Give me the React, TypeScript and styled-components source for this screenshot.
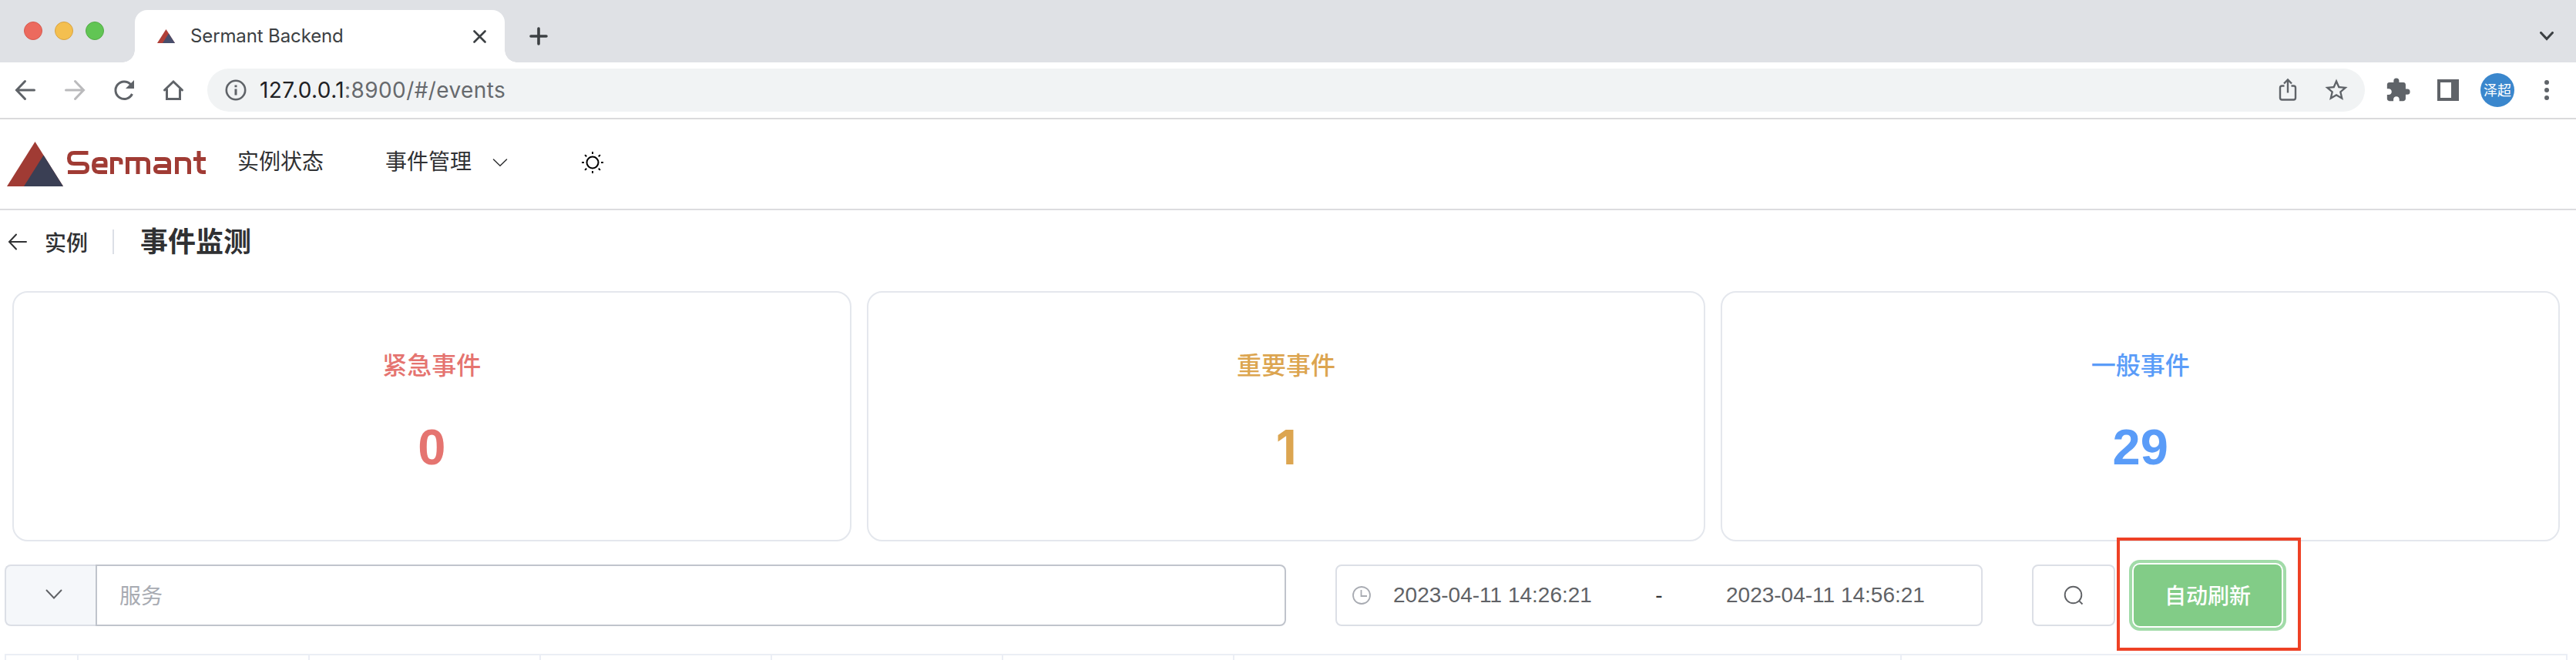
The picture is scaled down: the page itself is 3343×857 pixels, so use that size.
import React from "react";
import styled, { createGlobalStyle, css } from "styled-components";

const GlobalStyle = createGlobalStyle`
  *, *::before, *::after { box-sizing: border-box; }
  body { margin: 0; background: #fff; overflow: hidden; }
  button { font: inherit; padding: 0; margin: 0; border: 0; background: none; }
`;

const uiFont = `Inter, Roboto, "Noto Sans CJK SC", sans-serif`;
const pageFont = `"Liberation Sans", "Noto Sans CJK SC", sans-serif`;

const Window = styled.div`
  width: 3343px;
  height: 857px;
  overflow: hidden;
  display: flex;
  flex-direction: column;
  background: #fff;
  font-family: ${pageFont};
  color: #303133;
  svg { display: block; flex: none; }
`;

/* ---------- browser chrome ---------- */
const TabStrip = styled.header`
  flex: none;
  height: 81px;
  background: #dfe1e5;
  display: flex;
  align-items: flex-end;
  padding: 0 29px 0 31px;
`;
const Lights = styled.div`
  display: flex;
  gap: 16px;
  width: 144px;
  height: 52px;
  align-self: flex-start;
  align-items: flex-end;
`;
const Light = styled.i<{ $fill: string; $edge: string }>`
  width: 24px;
  height: 24px;
  border-radius: 50%;
  background: ${(p) => p.$fill};
  border: 1px solid ${(p) => p.$edge};
`;
const Tab = styled.div`
  position: relative;
  width: 480px;
  height: 68px;
  border-radius: 16px 16px 0 0;
  background: #fff;
  display: flex;
  align-items: center;
  padding: 0 24px 0 29px;
  &::before, &::after {
    content: "";
    position: absolute;
    bottom: 0;
    width: 16px;
    height: 16px;
  }
  &::before { left: -16px; background: radial-gradient(circle at 0 0, transparent 15.5px, #fff 16px); }
  &::after { right: -16px; background: radial-gradient(circle at 100% 0, transparent 15.5px, #fff 16px); }
`;
const TabTitle = styled.span`
  flex: 1;
  margin-left: 20px;
  margin-top: -1px;
  font: 400 24px/32px ${uiFont};
  letter-spacing: -0.12px;
  color: #3c4043;
`;
const NewTab = styled.button`
  height: 68px;
  margin-left: 32px;
  display: flex;
  align-items: center;
`;
const TabMenu = styled.button`
  height: 68px;
  margin-left: auto;
  display: flex;
  align-items: center;
`;
const Toolbar = styled.div`
  flex: none;
  height: 74px;
  border-bottom: 2px solid #dadadc;
  display: flex;
  align-items: center;
  padding: 0 32px 0 18px;
`;
const NavButtons = styled.div`
  display: flex;
  gap: 34px;
  width: 251px;
`;
const AddressBar = styled.div`
  width: 2800px;
  height: 56px;
  border-radius: 28px;
  background: #f1f3f4;
  display: flex;
  align-items: center;
  padding: 0 21px 0 22px;
`;
const Url = styled.span`
  flex: 1;
  margin-left: 16px;
  font: 400 28px/36px ${uiFont};
  letter-spacing: 0.4px;
  color: #66696d;
  b { font-weight: 400; color: #202124; }
`;
const AddressActions = styled.div`
  display: flex;
  gap: 34px;
`;
const Extensions = styled.div`
  flex: 1;
  display: flex;
  align-items: center;
  margin-left: 26px;
`;
const SidePanelIcon = styled.svg`
  margin-left: 34px;
`;
const Avatar = styled.div`
  width: 44px;
  height: 44px;
  margin: 0 36px 0 28px;
  border-radius: 50%;
  background: #3a87cd;
  color: #fff;
  font: 400 18px/43px "Noto Sans CJK SC", sans-serif;
  text-align: center;
`;

/* ---------- application header ---------- */
const AppBar = styled.nav`
  flex: none;
  height: 118px;
  border-bottom: 2px solid #dcdcdf;
  display: flex;
  align-items: center;
  padding: 0 9px 4px;
`;
const Brand = styled.div`
  width: 299px;
  height: 62px;
  display: flex;
  align-items: center;
  gap: 5px;
  & > :first-child { align-self: flex-end; }
`;
const NavItem = styled.a`
  display: flex;
  align-items: center;
  margin-right: 80px;
  font-size: 28px;
  line-height: 40px;
  gap: 27px;
  &:last-of-type { margin-right: 96px; }
`;
const PageHeader = styled.div`
  flex: none;
  height: 105px;
  display: flex;
  align-items: flex-start;
  padding: 21px 0 0 10px;
`;
const Back = styled.div`
  height: 40px;
  display: flex;
  align-items: center;
  gap: 22px;
  font-size: 28px;
  font-weight: 500;
`;
const Rule = styled.i`
  width: 2px;
  height: 32px;
  margin: 4px 34px 0 32px;
  background: #dcdfe6;
`;
const PageTitle = styled.h1`
  margin: 1px 0 0;
  font-size: 36px;
  line-height: 40px;
  font-weight: 600;
`;

/* ---------- summary cards ---------- */
const Cards = styled.section`
  flex: none;
  display: grid;
  grid-template-columns: repeat(3, 1fr);
  gap: 20px;
  padding: 0 21px 0 16px;
`;
const Card = styled.article<{ $color: string }>`
  height: 325px;
  border: 2px solid #e4e7ed;
  border-radius: 20px;
  display: flex;
  flex-direction: column;
  align-items: center;
  color: ${(p) => p.$color};
`;
const CardTitle = styled.div`
  margin-top: 71px;
  font-size: 32px;
  line-height: 48px;
  font-weight: 500;
`;
const CardValue = styled.div<{ $plainOne: boolean }>`
  margin-top: 46px;
  font-family: ${(p) => (p.$plainOne ? uiFont : pageFont)};
  font-size: ${(p) => (p.$plainOne ? 62 : 65)}px;
  line-height: 72px;
  font-weight: 700;
`;

/* ---------- filters ---------- */
const Filters = styled.section`
  flex: none;
  display: flex;
  align-items: center;
  height: 80px;
  margin-top: 30px;
  padding-left: 6px;
`;
const box = css`
  height: 80px;
  border: 2px solid #dcdfe6;
  border-radius: 8px;
  display: flex;
  align-items: center;
`;
const Prepend = styled.div`
  ${box}
  width: 118px;
  border-right: 0;
  border-radius: 8px 0 0 8px;
  background: #f5f7fa;
  justify-content: center;
  padding: 0 0 3px 8px;
`;
const SearchField = styled.div`
  ${box}
  width: 1545px;
  border-color: #c0c4cc;
  border-radius: 0 8px 8px 0;
  padding: 0 0 2px 29px;
  font-size: 28px;
  color: #a8abb2;
`;
const DateRange = styled.div`
  ${box}
  width: 840px;
  margin-left: 64px;
  padding-left: 20px;
  font-size: 28px;
  color: #606266;
`;
const ClockIcon = styled.svg`
  margin-right: 29px;
`;
const DateText = styled.span`
  width: 260px;
  white-space: nowrap;
`;
const Dash = styled.span`
  flex: none;
  width: 172px;
  padding-right: 2px;
  text-align: center;
  color: #303133;
`;
const SearchButton = styled.button`
  ${box}
  width: 108px;
  margin-left: 64px;
  border: 2px solid #dcdfe6;
  justify-content: center;
`;
const Highlight = styled.div`
  position: relative;
  z-index: 1;
  flex: none;
  width: 239px;
  height: 147px;
  margin: -3px 0 0 2px;
  border: 4px solid #ee4125;
  display: flex;
  align-items: center;
  justify-content: center;
`;
const RefreshButton = styled.button`
  width: 192px;
  height: 80px;
  margin: 3px 0 0 -3px;
  padding-bottom: 2px;
  border-radius: 8px;
  background: #82cc87;
  box-shadow: 0 0 0 2px #fff, 0 0 0 6px #a1dba8;
  color: #fff;
  font-size: 28px;
  font-weight: 500;
`;

/* ---------- table ---------- */
const Table = styled.div`
  flex: none;
  width: 3326px;
  height: 20px;
  margin: 36px 0 0 6px;
  border: 2px solid #ebeef5;
  display: grid;
  grid-template-columns: 94px repeat(5, 300px) 866px 1fr;
`;
const Cell = styled.div`
  border-right: 2px solid #ebeef5;
  &:last-child { border-right: 0; }
`;

/* ---------- drawings ---------- */
type StrokeProps = { w: number; h: number; d: string; color?: string; sw?: number };
const Stroke = ({ w, h, d, color = "#5f6368", sw = 3 }: StrokeProps) => (
  <svg width={w} height={h} viewBox={`0 0 ${w} ${h}`} fill="none" stroke={color} strokeWidth={sw} strokeLinecap="round">
    <path d={d} />
  </svg>
);
const Triangle = ({ w, h, light }: { w: number; h: number; light?: boolean }) => (
  <svg width={w} height={h} viewBox="0 0 73 58" preserveAspectRatio="none">
    <path d="M36.500 0 73 58H0Z" fill={light ? "#b03f38" : "#a03b34"} />
    <path d="M47.500 17.500 73 58H22Z" fill={light ? "#484e6c" : "#3a3f54"} />
  </svg>
);
const Wordmark = () => (
  <svg width="180" height="31" viewBox="0 0 180 31" fill="none" stroke="#a03b34" strokeWidth="5">
    <path d="M27.500 2.500H9Q2.500 2.500 2.500 9.500Q2.500 16.500 9 16.500H21Q26.500 16.500 26.500 22Q26.500 27.500 21 27.500H1" />
    <path d="M52 27.500H41Q34.500 27.500 34.500 19Q34.500 10.500 41 10.500H46Q50 10.500 50 15V19H35" />
    <path d="M58.500 30V10.500H66Q70 10.500 70 14V17.500" />
    <path d="M78.500 30V10.500H100Q105.500 10.500 105.500 16V30M92 11V30" />
    <path d="M114 10.500H127Q132.500 10.500 132.500 16V27.500H119Q114.500 27.500 114.500 23.500Q114.500 19.500 119 19.500H132" />
    <path d="M142.500 30V10.500H153Q158.500 10.500 158.500 16V30" />
    <path d="M171 0V22Q171 27.500 176 27.500H180M164 10.500H180" />
  </svg>
);

const cards = [
  { title: "紧急事件", value: 0, color: "#e57470" },
  { title: "重要事件", value: 1, color: "#dca550" },
  { title: "一般事件", value: 29, color: "#5a9cf8" },
];

export default function App() {
  return (
    <Window>
      <GlobalStyle />
      <TabStrip>
        <Lights>
          <Light $fill="#ec6a5e" $edge="#d65a4f" />
          <Light $fill="#f4bf4f" $edge="#d8a342" />
          <Light $fill="#61c554" $edge="#53ab47" />
        </Lights>
        <Tab>
          <Triangle w={23} h={18} light />
          <TabTitle>Sermant Backend</TabTitle>
          <Stroke w={17} h={17} d="M1.500 1.500 15.500 15.500M15.500 1.500 1.500 15.500" color="#3c4043" sw={2.6} />
        </Tab>
        <NewTab>
          <Stroke w={24} h={24} d="M12 2V22M2 12H22" color="#3c4043" sw={3.6} />
        </NewTab>
        <TabMenu>
          <Stroke w={18} h={12} d="M1.500 1.500 9 9.500 16.500 1.500" color="#3c4043" sw={3} />
        </TabMenu>
      </TabStrip>
      <Toolbar>
        <NavButtons>
          <Stroke w={30} h={30} d="M26.500 15H4M14.500 3.500 3.500 15 14.500 26.500" />
          <Stroke w={30} h={30} d="M3.500 15H26M15.500 3.500 26.500 15 15.500 26.500" color="#bababc" />
          <svg width="30" height="30" viewBox="0 0 30 30">
            <path d="M25.500 20A11.300 11.300 0 1 1 23.500 7.500" fill="none" stroke="#5f6368" strokeWidth="3" />
            <path d="M28 2V13H17Z" fill="#5f6368" />
          </svg>
          <Stroke w={30} h={30} d="M3.500 15 15 4 26.500 15M6.500 14V26.500H23.500V14" />
        </NavButtons>
        <AddressBar>
          <svg width="30" height="30" viewBox="0 0 30 30" fill="none" stroke="#5f6368" strokeWidth="2.600">
            <circle cx="15" cy="15" r="12.200" />
            <path d="M15 13.500V21.500M15 8.500V11.200" strokeWidth="3" />
          </svg>
          <Url><b>127.0.0.1</b>:8900/#/events</Url>
          <AddressActions>
            <svg width="26" height="30" viewBox="0 0 26 30" fill="none" stroke="#5f6368" strokeWidth="2.400">
              <path d="M8.500 10.500H5.500Q3 10.500 3 13V26Q3 28.500 5.500 28.500H20.500Q23 28.500 23 26V13Q23 10.500 20.500 10.500H17.500M13 19.500V2.500M8 7.500 13 2.500 18 7.500" />
            </svg>
            <svg width="32" height="32" viewBox="1 1 22 22" fill="#5f6368">
              <path d="M22 9.240l-7.190-.62L12 2 9.190 8.630 2 9.240l5.460 4.730L5.820 21 12 17.270 18.180 21l-1.630-7.030L22 9.240zM12 15.400l-3.760 2.270 1-4.280-3.320-2.880 4.380-.38L12 6.100l1.710 4.040 4.380.38-3.320 2.880 1 4.280L12 15.400z" />
            </svg>
          </AddressActions>
        </AddressBar>
        <Extensions>
          <svg width="34" height="34" viewBox="0 0 24 24" fill="#5f6368">
            <path d="M20.500 11H19V7c0-1.100-.9-2-2-2h-4V3.500a2.500 2.500 0 0 0-5 0V5H4c-1.100 0-1.990.9-1.990 2v3.800H3.500c1.490 0 2.700 1.210 2.700 2.700s-1.210 2.700-2.700 2.700H2V20c0 1.100.9 2 2 2h3.800v-1.500c0-1.490 1.210-2.700 2.700-2.700s2.700 1.210 2.700 2.700V22H17c1.100 0 2-.9 2-2v-4h1.500a2.500 2.500 0 0 0 0-5z" />
          </svg>
          <SidePanelIcon width="28" height="28" viewBox="0 0 28 28">
            <path fillRule="evenodd" d="M0 0H28V28H0ZM4 4V24H18V4Z" fill="#5f6368" />
          </SidePanelIcon>
          <Avatar>泽超</Avatar>
          <svg width="12" height="26" viewBox="0 0 12 26" fill="#5f6368">
            <circle cx="6" cy="3" r="3" />
            <circle cx="6" cy="13" r="3" />
            <circle cx="6" cy="23" r="3" />
          </svg>
        </Extensions>
      </Toolbar>

      <AppBar>
        <Brand>
          <Triangle w={73} h={58} />
          <Wordmark />
        </Brand>
        <NavItem>实例状态</NavItem>
        <NavItem>
          事件管理
          <Stroke w={20} h={12} d="M1.500 2 10 10.200 18.500 2" color="#303133" sw={1.500} />
        </NavItem>
        <svg width="28" height="28" viewBox="0 0 28 28" fill="none" stroke="#000" strokeWidth="2">
          <circle cx="14" cy="14" r="7.500" />
          <path d="M14 0V3M14 25V28M0 14H3M25 14H28M4.100 4.100 6.200 6.200M21.800 21.800 23.900 23.900M4.100 23.900 6.200 21.800M21.800 6.200 23.900 4.100" />
        </svg>
      </AppBar>

      <PageHeader>
        <Back>
          <Stroke w={26} h={22} d="M24 11H2.500M11 1.500 2 11 11 20.500" color="#303133" sw={2} />
          实例
        </Back>
        <Rule />
        <PageTitle>事件监测</PageTitle>
      </PageHeader>

      <Cards>
        {cards.map((c) => (
          <Card key={c.title} $color={c.color}>
            <CardTitle>{c.title}</CardTitle>
            <CardValue $plainOne={c.value === 1}>{c.value}</CardValue>
          </Card>
        ))}
      </Cards>

      <Filters>
        <Prepend>
          <Stroke w={22} h={14} d="M1.500 1.500 11 11.500 20.500 1.500" color="#606266" sw={1.900} />
        </Prepend>
        <SearchField>服务</SearchField>
        <DateRange>
          <ClockIcon width="24" height="24" viewBox="0 0 24 24" fill="none" stroke="#a8abb2" strokeWidth="1.800">
            <circle cx="12" cy="12" r="11" />
            <path d="M11.500 5V13H19" />
          </ClockIcon>
          <DateText>2023-04-11 14:26:21</DateText>
          <Dash>-</Dash>
          <DateText>2023-04-11 14:56:21</DateText>
        </DateRange>
        <SearchButton>
          <svg width="26" height="26" viewBox="0 0 26 26" fill="none" stroke="#606266" strokeWidth="1.900">
            <circle cx="12.500" cy="12.500" r="10.800" />
            <path d="M19.800 19.800 24.500 24.500" />
          </svg>
        </SearchButton>
        <Highlight>
          <RefreshButton>自动刷新</RefreshButton>
        </Highlight>
      </Filters>

      <Table>
        {Array.from({ length: 8 }, (_, i) => (
          <Cell key={i} />
        ))}
      </Table>
    </Window>
  );
}
